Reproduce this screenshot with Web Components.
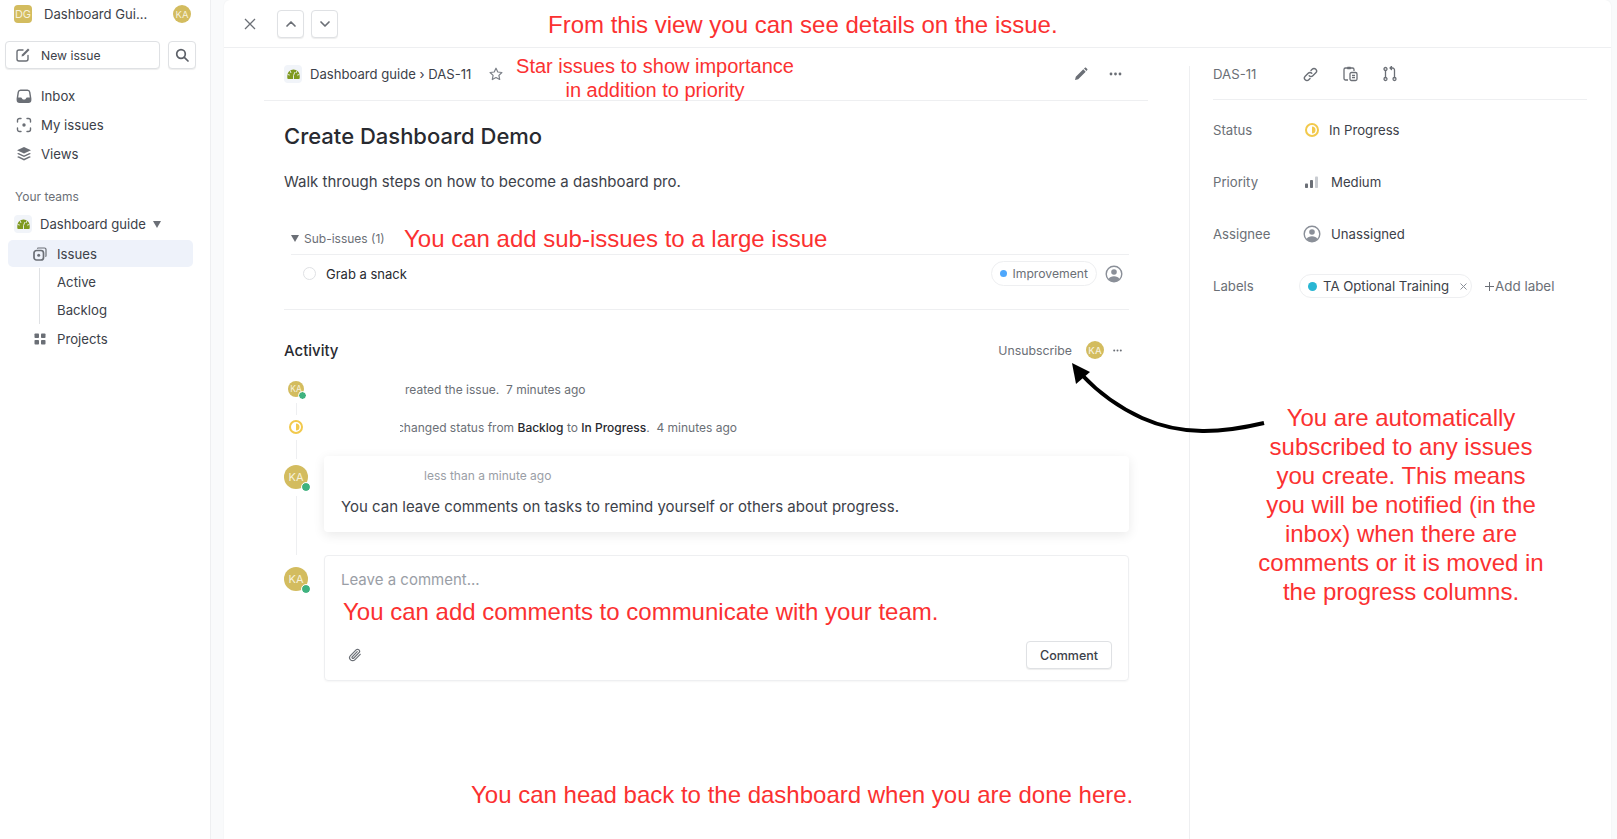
<!DOCTYPE html>
<html>
<head>
<meta charset="utf-8">
<title>Dashboard guide</title>
<style>
    html, body { margin: 0; height: 100%; }
    body {
        position: relative;
        height: 839px;
        overflow: hidden;
        font-family: Inter, "Liberation Sans", sans-serif;
        color: #3c4149;
        background: #fff;
    }
</style>
</head>
<body>
<issue-app></issue-app>

<page-note style="left:548px;top:11px;font-size:24px">From this view you can see details on the issue.</page-note>
<page-note style="left:490px;top:54px;width:330px;font-size:20px;line-height:24px;text-align:center">Star issues to show importance<br>in addition to priority</page-note>
<page-note style="left:404px;top:225px;font-size:24px">You can add sub-issues to a large issue</page-note>
<page-note style="left:343px;top:598px;font-size:24px">You can add comments to communicate with your team.</page-note>
<page-note style="left:471px;top:781px;font-size:24px">You can head back to the dashboard when you are done here.</page-note>
<page-note style="left:1241px;top:403px;width:320px;font-size:24px;line-height:29px;text-align:center">You are automatically<br>subscribed to any issues<br>you create. This means<br>you will be notified (in the<br>inbox) when there are<br>comments or it is moved in<br>the progress columns.</page-note>

<script>
const ICONS = {
    close: '<svg width="14" height="14" viewBox="0 0 14 14" fill="none" stroke="#6b6f76" stroke-width="1.3"><path d="M2 2l10 10M12 2L2 12"/></svg>',
    up: '<svg width="12" height="12" viewBox="0 0 12 12" fill="none" stroke="#6b6f76" stroke-width="1.7" stroke-linecap="round" stroke-linejoin="round"><path d="M2 8l4-4 4 4"/></svg>',
    down: '<svg width="12" height="12" viewBox="0 0 12 12" fill="none" stroke="#6b6f76" stroke-width="1.7" stroke-linecap="round" stroke-linejoin="round"><path d="M2 4l4 4 4-4"/></svg>',
    compose: '<svg width="16" height="16" viewBox="0 0 16 16" fill="none" stroke="#6b6f76" stroke-width="1.4" stroke-linecap="round"><path d="M8 3H4a2 2 0 0 0-2 2v7a2 2 0 0 0 2 2h7a2 2 0 0 0 2-2V8.500"/><path d="M6.500 9.500l.5-2 6-6 1.500 1.500-6 6z" fill="#6b6f76" stroke="none"/></svg>',
    search: '<svg width="14" height="14" viewBox="0 0 14 14" fill="none" stroke="#5c6068" stroke-width="1.7" stroke-linecap="round"><circle cx="6" cy="6" r="4.300"/><path d="M9.300 9.300L13 13"/></svg>',
    inbox: '<svg width="16" height="16" viewBox="0 0 16 16"><path fill="#6b6f76" d="M4.500 1.500h7A3 3 0 0 1 14.400 4l1 6.500V12a3 3 0 0 1-3 3h-8.800a3 3 0 0 1-3-3v-1.500l1-6.500a3 3 0 0 1 2.900-2.500zm0 1.500A1.500 1.500 0 0 0 3 4.300L2.200 9.500H5c.5 0 .7.300.9.700.3.800 1 1.300 2.100 1.300s1.800-.5 2.100-1.300c.2-.4.4-.7.900-.7h2.800L13 4.300A1.500 1.500 0 0 0 11.500 3z"/></svg>',
    mine: '<svg width="16" height="16" viewBox="0 0 16 16" fill="none" stroke="#6b6f76" stroke-width="1.400" stroke-linecap="round"><path d="M1.500 5V3.500a2 2 0 0 1 2-2H5M11 1.500h1.500a2 2 0 0 1 2 2V5M14.500 11v1.500a2 2 0 0 1-2 2H11M5 14.500H3.500a2 2 0 0 1-2-2V11"/><circle cx="8" cy="8" r="1.700" fill="#6b6f76" stroke="none"/></svg>',
    views: '<svg width="16" height="16" viewBox="0 0 16 16" fill="#6b6f76"><path d="M8 1l7 3.300-7 3.300-7-3.300z"/><path d="M2.600 6.900L8 9.400l5.400-2.500L15 7.700l-7 3.300-7-3.300z"/><path d="M2.600 10.300L8 12.800l5.400-2.500 1.600.8L8 14.600 1 11.100z"/></svg>',
    team: '<svg width="13" height="11" viewBox="0 0 13 11"><path fill="#7f9a20" d="M6.500.5A6.200 6.200 0 0 0 .3 6.700V9a1 1 0 0 0 1 1h10.400a1 1 0 0 0 1-1V6.700A6.200 6.200 0 0 0 6.500.5z"/><path d="M6.500 10V6.500M6.500 6.500L8 3M3 1.600L4 4M10 1.600L9 4M.8 5.500l2 .6M12.200 5.500l-2 .6" stroke="#eef2f8" stroke-width=".9" fill="none"/></svg>',
    issues: '<svg width="14" height="14" viewBox="0 0 14 14" fill="none" stroke="#6b6f76"><path stroke-width="1.200" d="M4.500 1.700c0-.4.300-.7.700-.7h6.300c.8 0 1.500.7 1.500 1.500v6.300c0 .4-.3.700-.7.700"/><rect x="1" y="3.500" width="9.500" height="9.500" rx="2.500" stroke-width="1.700"/><circle cx="5.700" cy="8.200" r="1.500" fill="#6b6f76" stroke="none"/></svg>',
    projects: '<svg width="12" height="12" viewBox="0 0 12 12" fill="#6b6f76"><rect x="0.500" y="0.500" width="4.500" height="4.500" rx=".8"/><rect x="7" y="0.500" width="4.500" height="4.500" rx=".8"/><rect x="0.500" y="7" width="4.500" height="4.500" rx=".8"/><rect x="7" y="7" width="4.500" height="4.500" rx=".8"/></svg>',
    star: '<svg width="14" height="14" viewBox="0 0 14 14" fill="none" stroke="#7c8088" stroke-width="1.200" stroke-linejoin="round"><path d="M7 1.200l1.800 3.800 4.100.5-3 2.900.8 4.100L7 10.500l-3.700 2 .8-4.100-3-2.900 4.100-.5z"/></svg>',
    pencil: '<svg width="14" height="14" viewBox="0 0 14 14" fill="#6b6f76"><path d="M1 13l.8-3.200L9.300 2.300l2.400 2.400-7.500 7.500zM10 1.600l.9-.9c.3-.3.800-.3 1.100 0l1.300 1.300c.3.300.3.800 0 1.100l-.9.900z"/></svg>',
    more: '<svg width="13" height="4" viewBox="0 0 13 4" fill="#6b6f76"><circle cx="2" cy="2" r="1.400"/><circle cx="6.500" cy="2" r="1.400"/><circle cx="11" cy="2" r="1.400"/></svg>',
    moreSmall: '<svg width="9" height="3" viewBox="0 0 9 3" fill="#6b6f76"><circle cx="1.200" cy="1.500" r="1"/><circle cx="4.500" cy="1.500" r="1"/><circle cx="7.800" cy="1.500" r="1"/></svg>',
    link: '<svg width="15" height="15" viewBox="0 0 15 15" fill="none" stroke="#6b6f76" stroke-width="1.400" stroke-linecap="round"><path d="M6.200 8.800a2.500 2.500 0 0 0 3.600 0l3-3a2.500 2.500 0 0 0-3.600-3.600L8 3.400"/><path d="M8.800 6.200a2.500 2.500 0 0 0-3.600 0l-3 3a2.500 2.500 0 0 0 3.600 3.600L7 11.600"/></svg>',
    clipboard: '<svg width="15" height="16" viewBox="0 0 15 16" fill="none" stroke="#6b6f76" stroke-width="1.300"><path d="M5 14H2.500A1.500 1.500 0 0 1 1 12.500v-9A1.500 1.500 0 0 1 2.500 2H4M8 2h1.500A1.500 1.500 0 0 1 11 3.500V5"/><rect x="4" y="0.800" width="4" height="2.400" rx=".6" fill="#6b6f76" stroke="none"/><rect x="7" y="6.500" width="7" height="8" rx="1.500"/><path d="M9 9.500h3M9 11.700h3"/></svg>',
    branch: '<svg width="14" height="16" viewBox="0 0 14 16" fill="none" stroke="#6b6f76" stroke-width="1.300" stroke-linecap="round" stroke-linejoin="round"><circle cx="2.500" cy="13" r="1.500"/><circle cx="2.500" cy="3" r="1.500"/><circle cx="11.500" cy="13" r="1.500"/><path d="M2.500 4.500v7M11.500 11.500V4A2 2 0 0 0 9.500 2H7M8.500.5L7 2l1.500 1.500"/></svg>',
    progress: '<svg width="14" height="14" viewBox="0 0 14 14"><circle cx="7" cy="7" r="6" fill="none" stroke="#f2c94c" stroke-width="2"/><path d="M7 3.500a3.500 3.500 0 0 1 0 7z" fill="#f2c94c"/></svg>',
    priority: '<svg width="14" height="13" viewBox="0 0 14 13"><rect x="1" y="7.500" width="3" height="4.500" rx=".8" fill="#6b6f76"/><rect x="6" y="4" width="3" height="8" rx=".8" fill="#6b6f76"/><rect x="11" y="0.500" width="3" height="11.500" rx=".8" fill="#c9ccd1"/></svg>',
    assignee: '<svg width="18" height="18" viewBox="0 0 18 18"><circle cx="9" cy="9" r="7.800" fill="#fff" stroke="#8a8f98" stroke-width="1.400"/><circle cx="9" cy="7" r="2.800" fill="#8a8f98"/><path d="M3.500 14.200C4.500 12 6.500 11.300 9 11.300s4.500.7 5.500 2.900A7.800 7.800 0 0 1 9 16.500a7.800 7.800 0 0 1-5.500-2.300z" fill="#8a8f98"/></svg>',
    clip: '<svg width="14" height="14" viewBox="0 0 14 14" fill="none" stroke="#6b6f76" stroke-width="1.200" stroke-linecap="round"><path d="M12.200 6.300l-5.400 5.500a3 3 0 0 1-4.300-4.200l5.600-5.700a2 2 0 0 1 2.900 2.800l-5.400 5.500a1 1 0 0 1-1.400-1.400l5-5.100"/></svg>',
    remove: '<svg width="7" height="7" viewBox="0 0 7 7" fill="none" stroke="#8a8f98" stroke-width="1"><path d="M.5.5l6 6M6.500.5l-6 6"/></svg>',
    plus: '<svg width="9" height="9" viewBox="0 0 9 9" fill="none" stroke="#6b6f76" stroke-width="1"><path d="M4.500 0v9M0 4.500h9"/></svg>',
    caret: '<svg width="8" height="7" viewBox="0 0 8 7" fill="#6b6f76"><path d="M0 0h8L4 7z"/></svg>'
};

// Small helper: every element here has a static template
class ShadowElement extends HTMLElement {
    constructor() {
        super();
        this.attachShadow({ mode: 'open' });
    }

    connectedCallback() {
        this.shadowRoot.innerHTML = this.render();
    }
}

class PageNote extends ShadowElement {
    render() {
        return `
        <style>
            :host {
                position: absolute;
                display: block;
                color: #fb3131;
                font-family: "Liberation Sans", Arial, sans-serif;
                line-height: 28px;
                white-space: nowrap;
            }
        </style>
        <slot></slot>`;
    }
}

class UserAvatar extends ShadowElement {
    render() {
        const size = Number(this.getAttribute('size') || 18);
        const square = this.hasAttribute('square');
        const online = this.hasAttribute('online');
        const dot = size > 20 ? 8 : 7;
        let fontSize = 9.5;
        if (size > 20) fontSize = 11;
        if (size < 18) fontSize = 8.5;
        if (square) fontSize = 11;
        return `
        <style>
            :host {
                display: block;
                position: relative;
                flex: none;
                width: ${size}px;
                height: ${size}px;
            }
            .face {
                width: 100%;
                height: 100%;
                border-radius: ${square ? '4px' : '50%'};
                background: #d3bc5f;
                color: #f6f1dc;
                font-size: ${fontSize}px;
                display: flex;
                align-items: center;
                justify-content: center;
            }
            .dot {
                position: absolute;
                right: -2px;
                bottom: -2px;
                width: ${dot}px;
                height: ${dot}px;
                box-sizing: border-box;
                border-radius: 50%;
                background: #3fb27f;
                outline: 1px solid #fff;
            }
        </style>
        <div class="face">${this.getAttribute('initials') || 'KA'}</div>
        ${online ? '<div class="dot"></div>' : ''}`;
    }
}

class NavItem extends ShadowElement {
    render() {
        const icon = ICONS[this.getAttribute('icon')] || '';
        return `
        <style>
            :host {
                display: flex;
                align-items: center;
                height: 27px;
                margin-top: 2px;
                font-size: 13.2px;
                color: #3c4149;
            }
            .icon {
                width: 16px;
                display: flex;
                justify-content: center;
                margin-left: var(--icon-left, 16px);
                margin-right: var(--icon-right, 9px);
            }
            :host([active]) {
                background: #eef2fa;
                border-radius: 5px;
            }
        </style>
        <span class="icon">${icon}</span>
        <slot></slot>`;
    }
}

class AppSidebar extends ShadowElement {
    render() {
        return `
        <style>
            :host {
                display: flex;
                flex-direction: column;
                flex: none;
                box-sizing: border-box;
                width: 211px;
                border-right: 1px solid #eeeff1;
                background: #fff;
                padding: 5px 14px 0 5px;
            }
            .workspace {
                display: flex;
                align-items: center;
                padding-left: 9px;
                height: 18px;
                font-size: 13.1px;
            }
            .workspace .name {
                margin-left: 12px;
                width: 129px;
                white-space: nowrap;
            }
            .actions {
                display: flex;
                gap: 8px;
                margin-top: 18px;
            }
            button {
                font: inherit;
                color: #3c4149;
                background: #fff;
                border: 1px solid #dfe1e4;
                border-radius: 4px;
                box-shadow: 0 1px 1px rgba(0, 0, 0, 0.07);
                height: 28px;
                padding: 0;
                display: flex;
                align-items: center;
            }
            .new {
                width: 155px;
                font-size: 12.2px;
                padding-left: 9px;
                gap: 10px;
            }
            .find {
                width: 28px;
                justify-content: center;
            }
            nav { margin-top: 11px; }
            nav nav-item { margin-top: 2px; }
            .teams-title {
                margin: 22px 0 0 10px;
                font-size: 12px;
                color: #6b6f76;
                height: 16px;
                line-height: 16px;
            }
            .team {
                display: flex;
                align-items: center;
                margin: 10px 0 0 9px;
                height: 18px;
                font-size: 13.1px;
            }
            .team-logo {
                width: 18px;
                height: 18px;
                border-radius: 4px;
                background: #f1f4f9;
                display: flex;
                align-items: center;
                justify-content: center;
                margin-right: 8px;
            }
            .caret-wrap { display: flex; margin-left: 7px; }
            .tree {
                margin: 7px 3px 0 3px;
                --icon-left: 24px;
                --icon-right: 9px;
            }
            .tree nav-item { height: 27px; margin: 0; }
            .children {
                margin: 1px 0 0 31px;
                border-left: 1px solid #dfe1e4;
                height: 56px;
            }
            .children div {
                height: 28px;
                line-height: 28px;
                padding-left: 17px;
                font-size: 13.2px;
            }
            .tree .projects { margin-top: 1px; }
        </style>
        <div class="workspace">
            <user-avatar square initials="DG"></user-avatar>
            <span class="name">Dashboard Gui...</span>
            <user-avatar initials="KA"></user-avatar>
        </div>
        <div class="actions">
            <button class="new">${ICONS.compose}<span>New issue</span></button>
            <button class="find">${ICONS.search}</button>
        </div>
        <nav>
            <nav-item icon="inbox" style="--icon-left:11px">Inbox</nav-item>
            <nav-item icon="mine" style="--icon-left:11px">My issues</nav-item>
            <nav-item icon="views" style="--icon-left:11px">Views</nav-item>
        </nav>
        <div class="teams-title">Your teams</div>
        <div class="team">
            <span class="team-logo">${ICONS.team}</span>
            <span>Dashboard guide</span>
            <span class="caret-wrap">${ICONS.caret}</span>
        </div>
        <div class="tree">
            <nav-item active icon="issues">Issues</nav-item>
            <div class="children">
                <div>Active</div>
                <div>Backlog</div>
            </div>
            <nav-item class="projects" icon="projects">Projects</nav-item>
        </div>`;
    }
}

class TopBar extends ShadowElement {
    render() {
        return `
        <style>
            :host {
                display: flex;
                align-items: center;
                flex: none;
                box-sizing: border-box;
                height: 48px;
                border-bottom: 1px solid #eeeff1;
                padding: 1px 0 0 19px;
            }
            .close { display: flex; width: 14px; margin-right: 20px; }
            button {
                width: 27px;
                height: 28px;
                padding: 0;
                margin-right: 7px;
                background: #fff;
                border: 1px solid #dfe1e4;
                border-radius: 4px;
                box-shadow: 0 1px 1px rgba(0, 0, 0, 0.07);
                display: flex;
                align-items: center;
                justify-content: center;
            }
        </style>
        <span class="close">${ICONS.close}</span>
        <button>${ICONS.up}</button>
        <button>${ICONS.down}</button>`;
    }
}

class IssueProps extends ShadowElement {
    render() {
        return `
        <style>
            :host {
                display: block;
                flex: none;
                box-sizing: border-box;
                width: 422px;
                border-left: 1px solid #eeeff1;
                margin-top: 18px;
                padding: 0 24px 0 23px;
                font-size: 13.2px;
            }
            .head {
                display: flex;
                align-items: center;
                padding-bottom: 17px;
                border-bottom: 1px solid #eeeff1;
                color: #6b6f76;
                height: 34px;
                box-sizing: border-box;
            }
            .head .id { width: 90px; }
            .head .tool { display: flex; width: 40px; }
            .row {
                display: flex;
                align-items: center;
                height: 52px;
            }
            .label { width: 84px; color: #6b6f76; }
            .icon { width: 27px; display: flex; margin-left: 7px; flex: none; }
            .pill {
                display: flex;
                align-items: center;
                height: 24px;
                width: 173px;
                box-sizing: border-box;
                border: 1px solid #eeeff1;
                border-radius: 12px;
                padding: 0 0 0 8px;
                margin-left: 2px;
                white-space: nowrap;
            }
            .pill i {
                width: 9px;
                height: 9px;
                flex: none;
                border-radius: 50%;
                background: #29b6d3;
                margin-right: 6px;
            }
            .pill b {
                display: flex;
                margin-left: 11px;
            }
            .add {
                display: flex;
                align-items: center;
                gap: 1px;
                margin-left: 13px;
                color: #6b6f76;
                font-size: 13.4px;
            }
        </style>
        <div class="head">
            <span class="id">DAS-11</span>
            <span class="tool">${ICONS.link}</span>
            <span class="tool">${ICONS.clipboard}</span>
            <span class="tool">${ICONS.branch}</span>
        </div>
        <div class="row" style="margin-top:4px"><span class="label">Status</span><span class="icon" style="margin-left:8px;width:24px">${ICONS.progress}</span><span>In Progress</span></div>
        <div class="row"><span class="label">Priority</span><span class="icon">${ICONS.priority}</span><span>Medium</span></div>
        <div class="row"><span class="label">Assignee</span><span class="icon" style="margin-left:6px;width:28px">${ICONS.assignee}</span><span>Unassigned</span></div>
        <div class="row"><span class="label">Labels</span><span class="pill"><i></i>TA Optional Training<b>${ICONS.remove}</b></span><span class="add">${ICONS.plus}Add label</span></div>`;
    }
}

class SubIssues extends ShadowElement {
    render() {
        return `
        <style>
            :host { display: block; margin-top: 36px; }
            .title {
                display: flex;
                align-items: center;
                height: 21px;
                padding: 0 0 5px 7px;
                font-size: 12px;
                color: #6b6f76;
                gap: 5px;
            }
            .row {
                margin-left: 7px;
                border-top: 1px solid #eeeff1;
                height: 37px;
                display: flex;
                align-items: center;
                font-size: 13px;
                color: #282a30;
            }
            .check {
                width: 11px;
                height: 11px;
                border: 1.5px solid #dfe1e4;
                border-radius: 50%;
                margin: 0 10px 0 12px;
            }
            .spacer { flex: 1; }
            .tag {
                display: flex;
                align-items: center;
                height: 25px;
                box-sizing: border-box;
                border: 1px solid #eeeff1;
                border-radius: 13px;
                padding: 0 8px;
                color: #6b6f76;
                font-size: 12.2px;
                margin-right: 8px;
            }
            .tag i {
                width: 7px;
                height: 7px;
                border-radius: 50%;
                background: #4ea7fc;
                margin-right: 5px;
            }
            .who { display: flex; margin-right: 6px; }
        </style>
        <div class="title">${ICONS.caret}<span>Sub-issues (1)</span></div>
        <div class="row">
            <span class="check"></span>
            <span>Grab a snack</span>
            <span class="spacer"></span>
            <span class="tag"><i></i>Improvement</span>
            <span class="who">${ICONS.assignee}</span>
        </div>`;
    }
}

class ActivityFeed extends ShadowElement {
    render() {
        return `
        <style>
            :host {
                display: block;
                margin-top: 17px;
                border-top: 1px solid #eeeff1;
            }
            .head {
                display: flex;
                align-items: center;
                height: 20px;
                margin-top: 30px;
                font-size: 15px;
                color: #282a30;
                font-weight: 500;
            }
            .spacer { flex: 1; }
            .unsub { font-size: 12.3px; color: #6b6f76; font-weight: 400; margin-right: 14px; }
            .dots { display: flex; margin: 0 7px 0 9px; }
            .event {
                display: flex;
                align-items: center;
                height: 18px;
                font-size: 12px;
                color: #6b6f76;
            }
            .rail {
                width: 24px;
                display: flex;
                justify-content: center;
                flex: none;
            }
            .event b { font-weight: 500; color: #282a30; }
            .text { position: relative; white-space: nowrap; }
            /* the name in front of the text is blanked out in the screenshot */
            .blank {
                position: absolute;
                left: -1px;
                top: 0;
                width: 4px;
                height: 100%;
                background: #fff;
            }
            .line {
                width: 1px;
                background: #eeeff1;
                margin-left: 12px;
            }
            .thread {
                display: flex;
                align-items: flex-start;
                gap: 16px;
            }
            .thread .side {
                flex: none;
                width: 24px;
                padding-top: 9px;
            }
            .side .line { height: 36px; margin-top: 7px; }
            .card {
                flex: 1;
                background: #fff;
                border-radius: 4px;
                box-shadow: 0 3px 12px rgba(0, 0, 0, 0.09);
                height: 76px;
                box-sizing: border-box;
                padding: 12px 17px;
                font-size: 15px;
            }
            .when { font-size: 12px; color: #9a9ea6; padding-left: 83px; height: 16px; line-height: 16px; }
            .body { margin-top: 14px; line-height: 18px; }
            .box {
                flex: 1;
                height: 126px;
                box-sizing: border-box;
                border: 1px solid #eeeff1;
                border-radius: 4px;
                box-shadow: 0 1px 2px rgba(0, 0, 0, 0.04);
                padding: 14px 16px 11px 16px;
                display: flex;
                flex-direction: column;
                font-size: 15px;
                color: #9a9ea6;
            }
            .foot {
                margin-top: auto;
                display: flex;
                align-items: center;
                justify-content: space-between;
            }
            .foot span { display: flex; margin-left: 7px; }
            button {
                font: inherit;
                font-size: 12.5px;
                font-weight: 500;
                color: #3c4149;
                width: 86px;
                height: 28px;
                padding: 0;
                background: #fff;
                border: 1px solid #dfe1e4;
                border-radius: 4px;
                box-shadow: 0 1px 1px rgba(0, 0, 0, 0.07);
            }
        </style>
        <div class="head">
            <span>Activity</span>
            <span class="spacer"></span>
            <span class="unsub">Unsubscribe</span>
            <user-avatar initials="KA"></user-avatar>
            <span class="dots">${ICONS.moreSmall}</span>
        </div>
        <div class="event" style="margin-top:20px">
            <span class="rail"><user-avatar initials="KA" size="16" online></user-avatar></span>
            <span class="text" style="margin-left:97px">reated the issue.&nbsp; 7 minutes ago</span>
        </div>
        <div class="line" style="height:12px;margin-top:5px"></div>
        <div class="event" style="margin-top:3px">
            <span class="rail">${ICONS.progress}</span>
            <span class="text" style="margin-left:89px"><span class="blank"></span>changed status from <b>Backlog</b> to <b>In Progress</b>.&nbsp; 4 minutes ago</span>
        </div>
        <div class="line" style="height:19px;margin-top:4px;margin-bottom:-3px"></div>
        <div class="thread">
            <div class="side">
                <user-avatar initials="KA" size="24" online></user-avatar>
                <div class="line"></div>
            </div>
            <div class="card">
                <div class="when">less than a minute ago</div>
                <div class="body">You can leave comments on tasks to remind yourself or others about progress.</div>
            </div>
        </div>
        <div class="line" style="height:23px"></div>
        <div class="thread">
            <div class="side" style="padding-top:12px">
                <user-avatar initials="KA" size="24" online></user-avatar>
            </div>
            <div class="box">
                <div>Leave a comment...</div>
                <div class="foot"><span>${ICONS.clip}</span><button>Comment</button></div>
            </div>
        </div>`;
    }
}

class IssueBody extends ShadowElement {
    render() {
        return `
        <style>
            :host {
                display: block;
                flex: 1;
                min-width: 0;
                padding: 0 41px 0 40px;
            }
            .crumb {
                display: flex;
                align-items: center;
                height: 53px;
                box-sizing: border-box;
                border-bottom: 1px solid #eeeff1;
                padding: 0 26px 0 20px;
                font-size: 13.1px;
            }
            .crumb .logo {
                width: 18px;
                height: 18px;
                border-radius: 4px;
                background: #f1f4f9;
                display: flex;
                align-items: center;
                justify-content: center;
                margin-right: 8px;
            }
            .crumb .star { display: flex; margin-left: 18px; }
            .spacer { flex: 1; }
            .crumb .tool { display: flex; margin-left: 21px; }
            .inner { padding: 0 19px 0 20px; }
            h1 {
                margin: 21px 0 0;
                font-size: 22px;
                font-weight: 500;
                line-height: 28px;
                color: #282a30;
            }
            p {
                margin: 22px 0 0;
                font-size: 15px;
                line-height: 20px;
            }
        </style>
        <div class="crumb">
            <span class="logo">${ICONS.team}</span>
            <span>Dashboard guide › DAS-11</span>
            <span class="star">${ICONS.star}</span>
            <span class="spacer"></span>
            <span class="tool">${ICONS.pencil}</span>
            <span class="tool">${ICONS.more}</span>
        </div>
        <div class="inner">
            <h1>Create Dashboard Demo</h1>
            <p>Walk through steps on how to become a dashboard pro.</p>
            <sub-issues></sub-issues>
            <activity-feed></activity-feed>
        </div>`;
    }
}

class IssueApp extends ShadowElement {
    render() {
        return `
        <style>
            :host {
                display: flex;
                height: 839px;
                background: #f9fafb;
            }
            main {
                display: flex;
                flex-direction: column;
                margin: 0 6px 0 13px;
                flex: 1;
                min-width: 0;
                background: #fff;
                border-radius: 6px 6px 0 0;
                box-shadow: 0 0 2px rgba(0, 0, 0, 0.06);
            }
            .columns { display: flex; flex: 1; min-height: 0; }
            svg.arrow {
                position: absolute;
                left: 0;
                top: 0;
                pointer-events: none;
            }
        </style>
        <app-sidebar></app-sidebar>
        <main>
            <top-bar></top-bar>
            <div class="columns">
                <issue-body></issue-body>
                <issue-props></issue-props>
            </div>
        </main>
        <svg class="arrow" width="1617" height="839" viewBox="0 0 1617 839">
            <path d="M1264 423C1222 433 1182 436 1142 418C1118 407 1098 392 1082 375" fill="none" stroke="#000" stroke-width="4"/>
            <path d="M1072 363L1090 372L1076 384z" fill="#000"/>
        </svg>`;
    }
}

customElements.define('page-note', PageNote);
customElements.define('user-avatar', UserAvatar);
customElements.define('nav-item', NavItem);
customElements.define('app-sidebar', AppSidebar);
customElements.define('top-bar', TopBar);
customElements.define('issue-props', IssueProps);
customElements.define('sub-issues', SubIssues);
customElements.define('activity-feed', ActivityFeed);
customElements.define('issue-body', IssueBody);
customElements.define('issue-app', IssueApp);
</script>
</body>
</html>
